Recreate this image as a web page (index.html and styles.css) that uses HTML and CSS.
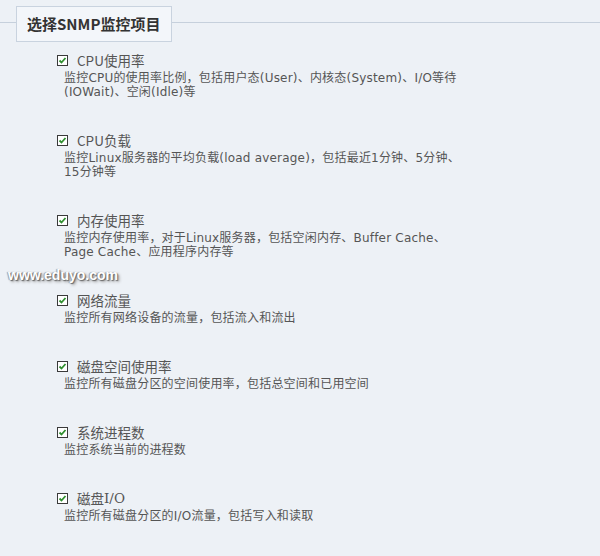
FILE: index.html
```html
<!DOCTYPE html>
<html lang="zh-CN">
<head>
<meta charset="utf-8">
<link rel="stylesheet" href="styles.css">
</head>
<body>
<div class="page">
  <div class="fieldset">
    <div class="legend-row">
      <div class="legend">选择SNMP监控项目</div>
    </div>
    <ul class="items">
      <li class="item">
        <div class="title"><span class="cb"><svg width="11" height="11" viewBox="0 0 11 11"><rect x="0.5" y="0.5" width="10" height="10" fill="#fff" stroke="#3a3a3a"/><path d="M2.5 5.5 L4.5 7.5 L8.5 3" fill="none" stroke="#2f8f2f" stroke-width="1.8"/></svg></span>CPU使用率</div>
        <div class="desc">监控CPU的使用率比例，包括用户态(User)、内核态(System)、I/O等待<br>(IOWait)、空闲(Idle)等</div>
      </li>
      <li class="item">
        <div class="title"><span class="cb"><svg width="11" height="11" viewBox="0 0 11 11"><rect x="0.5" y="0.5" width="10" height="10" fill="#fff" stroke="#3a3a3a"/><path d="M2.5 5.5 L4.5 7.5 L8.5 3" fill="none" stroke="#2f8f2f" stroke-width="1.8"/></svg></span>CPU负载</div>
        <div class="desc">监控Linux服务器的平均负载(load average)，包括最近1分钟、5分钟、<br>15分钟等</div>
      </li>
      <li class="item">
        <div class="title"><span class="cb"><svg width="11" height="11" viewBox="0 0 11 11"><rect x="0.5" y="0.5" width="10" height="10" fill="#fff" stroke="#3a3a3a"/><path d="M2.5 5.5 L4.5 7.5 L8.5 3" fill="none" stroke="#2f8f2f" stroke-width="1.8"/></svg></span>内存使用率</div>
        <div class="desc">监控内存使用率，对于Linux服务器，包括空闲内存、Buffer Cache、<br>Page Cache、应用程序内存等</div>
      </li>
      <li class="item">
        <div class="title"><span class="cb"><svg width="11" height="11" viewBox="0 0 11 11"><rect x="0.5" y="0.5" width="10" height="10" fill="#fff" stroke="#3a3a3a"/><path d="M2.5 5.5 L4.5 7.5 L8.5 3" fill="none" stroke="#2f8f2f" stroke-width="1.8"/></svg></span>网络流量</div>
        <div class="desc">监控所有网络设备的流量，包括流入和流出</div>
      </li>
      <li class="item">
        <div class="title"><span class="cb"><svg width="11" height="11" viewBox="0 0 11 11"><rect x="0.5" y="0.5" width="10" height="10" fill="#fff" stroke="#3a3a3a"/><path d="M2.5 5.5 L4.5 7.5 L8.5 3" fill="none" stroke="#2f8f2f" stroke-width="1.8"/></svg></span>磁盘空间使用率</div>
        <div class="desc">监控所有磁盘分区的空间使用率，包括总空间和已用空间</div>
      </li>
      <li class="item">
        <div class="title"><span class="cb"><svg width="11" height="11" viewBox="0 0 11 11"><rect x="0.5" y="0.5" width="10" height="10" fill="#fff" stroke="#3a3a3a"/><path d="M2.5 5.5 L4.5 7.5 L8.5 3" fill="none" stroke="#2f8f2f" stroke-width="1.8"/></svg></span>系统进程数</div>
        <div class="desc">监控系统当前的进程数</div>
      </li>
      <li class="item">
        <div class="title"><span class="cb"><svg width="11" height="11" viewBox="0 0 11 11"><rect x="0.5" y="0.5" width="10" height="10" fill="#fff" stroke="#3a3a3a"/><path d="M2.5 5.5 L4.5 7.5 L8.5 3" fill="none" stroke="#2f8f2f" stroke-width="1.8"/></svg></span>磁盘<span class="serif">I/O</span></div>
        <div class="desc">监控所有磁盘分区的I/O流量，包括写入和读取</div>
      </li>
    </ul>
  </div>
  <div class="watermark">www.eduyo.com</div>
</div>
</body>
</html>
```

FILE: styles.css
```css
html, body {
  margin: 0;
  padding: 0;
  background: #edf1f6;
}
.page {
  position: relative;
  width: 600px;
  height: 556px;
  overflow: hidden;
  font-family: "DejaVu Sans", "Noto Sans CJK SC", sans-serif;
  color: #555;
}
.fieldset {
  padding-top: 6px;
}
.legend-row {
  position: relative;
  padding-left: 16px;
  height: 36px;
}
.legend-row::before {
  content: "";
  position: absolute;
  left: 0;
  right: 0;
  top: 16px;
  border-top: 1px solid #c6d0dc;
}
.legend {
  position: relative;
  display: inline-block;
  box-sizing: border-box;
  width: 156px;
  height: 36px;
  line-height: 34px;
  border: 1px solid #c9d3df;
  background: #f3f6fa;
  padding-left: 10px;
  font-family: "Noto Sans CJK SC", "DejaVu Sans", sans-serif;
  font-weight: bold;
  font-size: 15px;
  color: #333;
}
.items {
  list-style: none;
  margin: 0;
  padding: 9px 0 0 57px;
}
.item {
  margin-bottom: 32px;
}
.title {
  display: flex;
  align-items: center;
  height: 18px;
  font-size: 13.5px;
  color: #555;
  font-family: "Noto Sans CJK SC", "DejaVu Sans", sans-serif;
  font-weight: normal;
}
.cb {
  display: inline-flex;
  width: 11px;
  height: 11px;
  margin-right: 9px;
}
.cb svg {
  display: block;
}
.serif {
  font-family: "DejaVu Serif", "Liberation Serif", serif;
  font-weight: normal;
}
.desc {
  margin-top: 2px;
  padding-left: 7px;
  font-size: 12px;
  line-height: 14px;
  letter-spacing: 0.2px;
  color: #555;
  white-space: nowrap;
}
.watermark {
  position: absolute;
  left: 8px;
  top: 267px;
  font-family: "Liberation Sans", sans-serif;
  font-weight: bold;
  font-size: 14px;
  color: #fff;
  text-shadow: 1px 1px 1px #666, -1px 0 1px #999, 2px 2px 3px #999;
}
```
